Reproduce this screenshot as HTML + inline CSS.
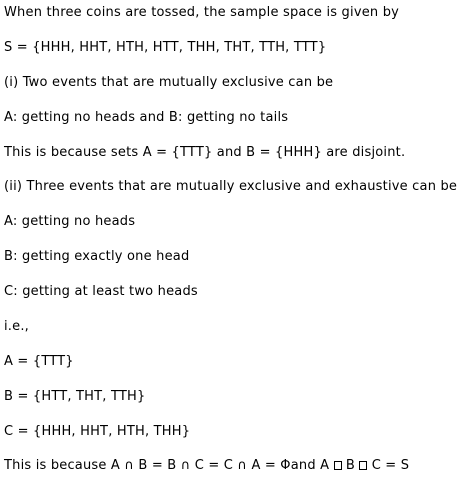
<!DOCTYPE html>
<html><head><meta charset="utf-8"><style>
html,body{margin:0;padding:0;background:#fff;width:466px;height:477px;overflow:hidden}
body{position:relative;font-family:"DejaVu Sans","Liberation Sans",sans-serif;font-size:13px;letter-spacing:0.2px;color:#000}
p{position:absolute;left:4px;margin:0;white-space:nowrap;line-height:14px}
.b{display:inline-block;width:8px;height:9px;border:1px solid #000;box-sizing:border-box;vertical-align:-1px}
</style></head><body>
<p style="top:6px">When three coins are tossed, the sample space is given by</p>
<p style="top:41px">S = {HHH, HHT, HTH, HTT, THH, THT, TTH, TTT}</p>
<p style="top:76px">(i) Two events that are mutually exclusive can be</p>
<p style="top:111px">A: getting no heads and B: getting no tails</p>
<p style="top:146px">This is because sets A = {TTT} and B = {HHH} are disjoint.</p>
<p style="top:180px">(ii) Three events that are mutually exclusive and exhaustive can be</p>
<p style="top:215px">A: getting no heads</p>
<p style="top:250px">B: getting exactly one head</p>
<p style="top:285px">C: getting at least two heads</p>
<p style="top:320px">i.e.,</p>
<p style="top:355px">A = {TTT}</p>
<p style="top:390px">B = {HTT, THT, TTH}</p>
<p style="top:425px">C = {HHH, HHT, HTH, THH}</p>
<p style="top:459px">This is because A ∩ B = B ∩ C = C ∩ A = Φand A <span class="b"></span> B <span class="b"></span> C = S</p>
</body></html>
